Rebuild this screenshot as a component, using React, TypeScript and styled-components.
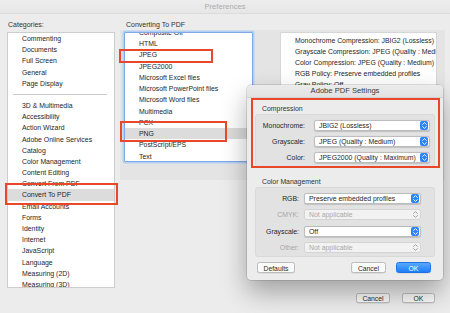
import styled, { createGlobalStyle } from "styled-components";

const RED = "#e8472a";
const BLUE = "#2f83f6";

const categoriesTop = ["Commenting", "Documents", "Full Screen", "General", "Page Display"];
const categoriesMain = [
  "3D & Multimedia", "Accessibility", "Action Wizard", "Adobe Online Services", "Catalog",
  "Color Management", "Content Editing", "Convert From PDF", "Convert To PDF", "Email Accounts",
  "Forms", "Identity", "Internet", "JavaScript", "Language", "Measuring (2D)", "Measuring (3D)",
];
const formats = [
  "Composite GIF", "HTML", "JPEG", "JPEG2000", "Microsoft Excel files", "Microsoft PowerPoint files",
  "Microsoft Word files", "Multimedia", "PCX", "PNG", "PostScript/EPS", "Text",
];
const summary = [
  "Monochrome Compression: JBIG2 (Lossless)",
  "Grayscale Compression: JPEG (Quality : Medium)",
  "Color Compression: JPEG (Quality : Medium)",
  "RGB Policy: Preserve embedded profiles",
  "Gray Policy: Off",
];

// red call-out frames drawn over the screenshot
const marks = [
  { x: 119, y: 49, w: 94, h: 14 },
  { x: 120, y: 121, w: 107, h: 21 },
  { x: 5, y: 183, w: 113, h: 22 },
  { x: 251, y: 98, w: 189, h: 70 },
];

const GlobalStyle = createGlobalStyle`
  html, body { margin:0; padding:0; background:#ececec; }
  body { font-family:"Liberation Sans", Arial, sans-serif; -webkit-font-smoothing:antialiased; }
`;

export default function App() {
  return (
    <>
      <GlobalStyle />
      <Window>
        <TitleBar>Preferences</TitleBar>
        <Body>
          <LeftCol>
            <Label>Categories:</Label>
            <CatList>
              {categoriesTop.map((c) => <CatRow key={c}>{c}</CatRow>)}
              <Separator />
              {categoriesMain.map((c) => (
                <CatRow key={c} $selected={c === "Convert To PDF"}>{c}</CatRow>
              ))}
            </CatList>
          </LeftCol>
          <RightCol>
            <Label $indent={6}>Converting To PDF</Label>
            <Panel>
              <FormatList>
                <Scroller>
                  {formats.map((f) => (
                    <FormatRow key={f} $selected={f === "PNG"}>{f}</FormatRow>
                  ))}
                </Scroller>
              </FormatList>
              <Summary>
                {summary.map((s) => <SummaryLine key={s}>{s}</SummaryLine>)}
              </Summary>
            </Panel>
          </RightCol>
        </Body>
        <Footer>
          <PushButton $w={34}>Cancel</PushButton>
          <PushButton $w={33}>OK</PushButton>
        </Footer>

        <Dialog>
          <DialogTitle>Adobe PDF Settings</DialogTitle>
          <DialogBody>
            <SectionLabel>Compression</SectionLabel>
            <Group $labelW={49} $gap={9}>
              <Field label="Monochrome:" value="JBIG2 (Lossless)" width={116} height={16} />
              <Field label="Grayscale:" value="JPEG (Quality : Medium)" width={116} height={16} />
              <Field label="Color:" value="JPEG2000 (Quality : Maximum)" width={116} height={16} />
            </Group>
            <SectionLabel $top={10}>Color Management</SectionLabel>
            <Group $labelW={43} $gap={5}>
              <Field label="RGB:" value="Preserve embedded profiles" width={117} height={16.5} />
              <Field label="CMYK:" value="Not applicable" width={117} height={16.5} disabled />
              <Field label="Grayscale:" value="Off" width={117} height={16.5} />
              <Field label="Other:" value="Not applicable" width={117} height={16.5} disabled />
            </Group>
            <DialogFooter>
              <PushButton $w={38}>Defaults</PushButton>
              <Spacer />
              <PushButton $w={35}>Cancel</PushButton>
              <PushButton $w={35} $primary>OK</PushButton>
            </DialogFooter>
          </DialogBody>
        </Dialog>

        {marks.map((m, i) => (
          <Mark key={i} $x={m.x} $y={m.y} $w={m.w} $h={m.h} />
        ))}
      </Window>
    </>
  );
}

function Field({ label, value, width, height, disabled }: {
  label: string; value: string; width: number; height: number; disabled?: boolean;
}) {
  return (
    <FieldRow $h={height}>
      <FieldLabel $disabled={disabled}>{label}</FieldLabel>
      <Select $w={width} $disabled={disabled}>
        <span>{value}</span>
        <Stepper $disabled={disabled}>
          <svg width="7" height="9" viewBox="0 0 7 9">
            <path d="M1.6 3.4 L3.5 1.6 L5.4 3.4 M1.6 5.6 L3.5 7.4 L5.4 5.6"
              fill="none" stroke={disabled ? "#9a9a9a" : "#fff"} strokeWidth="0.9"
              strokeLinecap="round" strokeLinejoin="round" />
          </svg>
        </Stepper>
      </Select>
    </FieldRow>
  );
}

const Window = styled.div`
position:relative;
width:450px;
height:313px;
overflow:hidden;
background:#ececec;
display:flex;
flex-direction:column;
font-size:6.9px;
color:#262626;
`
const TitleBar = styled.div`
height:13px;
line-height:13px;
text-align:center;
font-size:7.6px;
color:#ababab;
background:linear-gradient(#ededed,#e6e6e6);
border-bottom:1px solid #dcdcdc;
`
const Body = styled.div`
flex:1;
display:flex;
gap:5px;
padding:5px 5px 0 7px;
min-height:0;
`
const LeftCol = styled.div`
width:108px;
flex-shrink:0;
display:flex;
flex-direction:column;
`
const RightCol = styled.div`
flex:1;
min-width:0;
display:flex;
flex-direction:column;
`
const Label = styled.div<{ $indent?: number }>`
height:11px;
line-height:11px;
padding-left:${p => p.$indent || 1}px;
color:#333;
font-size:7px;
`
const CatList = styled.div`
margin-top:2px;
height:256px;
background:#fff;
border:0.5px solid #cdcdcd;
box-sizing:border-box;
overflow:hidden;
`
const CatRow = styled.div<{ $selected?: boolean }>`
height:11.2px;
line-height:11.2px;
padding-left:14px;
white-space:nowrap;
background:${p => p.$selected ? "#dcdcdc" : "transparent"};
`
const Separator = styled.div`
height:11px;
display:flex;
align-items:center;
padding:0 7px 0 5px;
&::before{
  content:"";
  flex:1;
  height:1px;
  background:#cbcbcb;
}
`
const Panel = styled.div`
height:150px;
display:flex;
align-items:flex-start;
padding:2px 8px 0 4px;
box-sizing:border-box;
background:#e4e4e4;
`
const FormatList = styled.div`
width:129px;
height:130px;
flex-shrink:0;
box-sizing:border-box;
background:#fff;
border:1px solid #7ea9e6;
box-shadow:0 0 0 1.5px #b3cff3;
border-radius:1px;
overflow:hidden;
`
const Scroller = styled.div`
margin-top:-6.2px;
`
const FormatRow = styled.div<{ $selected?: boolean }>`
height:11.25px;
line-height:11.25px;
padding-left:14px;
white-space:nowrap;
background:${p => p.$selected ? "#dcdcdc" : "transparent"};
`
const Summary = styled.div`
flex:1;
min-width:0;
margin-left:27px;
height:100px;
padding:1.5px 0 0 14px;
box-sizing:border-box;
background:#fff;
border:0.5px solid #d6d6d6;
overflow:hidden;
`
const SummaryLine = styled.div`
height:11.1px;
line-height:11.1px;
white-space:nowrap;
`
const Footer = styled.div`
display:flex;
justify-content:flex-end;
gap:12px;
padding:1px 15px 10px 0;
`
const PushButton = styled.div<{ $w: number; $primary?: boolean }>`
width:${p => p.$w}px;
height:10px;
line-height:10px;
text-align:center;
font-size:6.8px;
border-radius:2.5px;
box-sizing:border-box;
color:${p => p.$primary ? "#fff" : "#2a2a2a"};
background:${p => p.$primary ? "linear-gradient(#5aa8fd,#1d7ff7)" : "#fafafa"};
border:0.5px solid ${p => p.$primary ? "#1a74e6" : "#bcbcbc"};
box-shadow:0 0.5px 0.5px rgba(0,0,0,0.12);
`
const Dialog = styled.div`
position:absolute;
left:247px;
top:85px;
width:196px;
height:195px;
background:#ececec;
border-radius:4px;
box-shadow:0 12px 26px rgba(0,0,0,0.32), 0 0 0 0.5px rgba(0,0,0,0.22);
display:flex;
flex-direction:column;
overflow:hidden;
`
const DialogTitle = styled.div`
height:12px;
line-height:12px;
text-align:center;
font-size:7.6px;
color:#3a3a3a;
background:linear-gradient(#ebebeb,#e2e2e2);
border-bottom:0.5px solid #d2d2d2;
`
const DialogBody = styled.div`
flex:1;
display:flex;
flex-direction:column;
padding:0 8px 7px;
`
const SectionLabel = styled.div<{ $top?: number }>`
margin-top:${p => p.$top ?? 6}px;
height:10px;
line-height:10px;
padding-left:7px;
color:#333;
`
const Group = styled.div<{ $labelW: number; $gap: number }>`
padding-top:2.5px;
background:#e2e2e2;
border:0.5px solid #d9d9d9;
border-radius:3px;
--label-w:${p => p.$labelW}px;
--gap:${p => p.$gap}px;
`
const FieldRow = styled.div<{ $h: number }>`
height:${p => p.$h}px;
display:flex;
align-items:center;
gap:var(--gap);
`
const FieldLabel = styled.div<{ $disabled?: boolean }>`
width:var(--label-w);
text-align:right;
white-space:nowrap;
color:${p => p.$disabled ? "#a6a6a6" : "#262626"};
`
const Select = styled.div<{ $w: number; $disabled?: boolean }>`
width:${p => p.$w}px;
height:11px;
box-sizing:border-box;
display:flex;
align-items:center;
justify-content:space-between;
padding:0 1px 0 4px;
border-radius:2.5px;
background:${p => p.$disabled ? "#f2f2f2" : "#fff"};
border:0.5px solid ${p => p.$disabled ? "#d4d4d4" : "#bdbdbd"};
box-shadow:${p => p.$disabled ? "none" : "0 0.5px 1px rgba(0,0,0,0.15)"};
color:${p => p.$disabled ? "#a9a9a9" : "#262626"};
white-space:nowrap;
`
const Stepper = styled.div<{ $disabled?: boolean }>`
width:8px;
height:9px;
border-radius:2px;
display:flex;
align-items:center;
justify-content:center;
background:${p => p.$disabled ? "transparent" : BLUE};
`
const DialogFooter = styled.div`
margin-top:auto;
display:flex;
align-items:center;
gap:10px;
padding:0 4px 0 2px;
& > div { height:11px; line-height:11px; }
`
const Spacer = styled.div`
flex:1;
`
const Mark = styled.div<{ $x: number; $y: number; $w: number; $h: number }>`
position:absolute;
left:${p => p.$x}px;
top:${p => p.$y}px;
width:${p => p.$w}px;
height:${p => p.$h}px;
box-sizing:border-box;
border:2px solid ${RED};
pointer-events:none;
`
